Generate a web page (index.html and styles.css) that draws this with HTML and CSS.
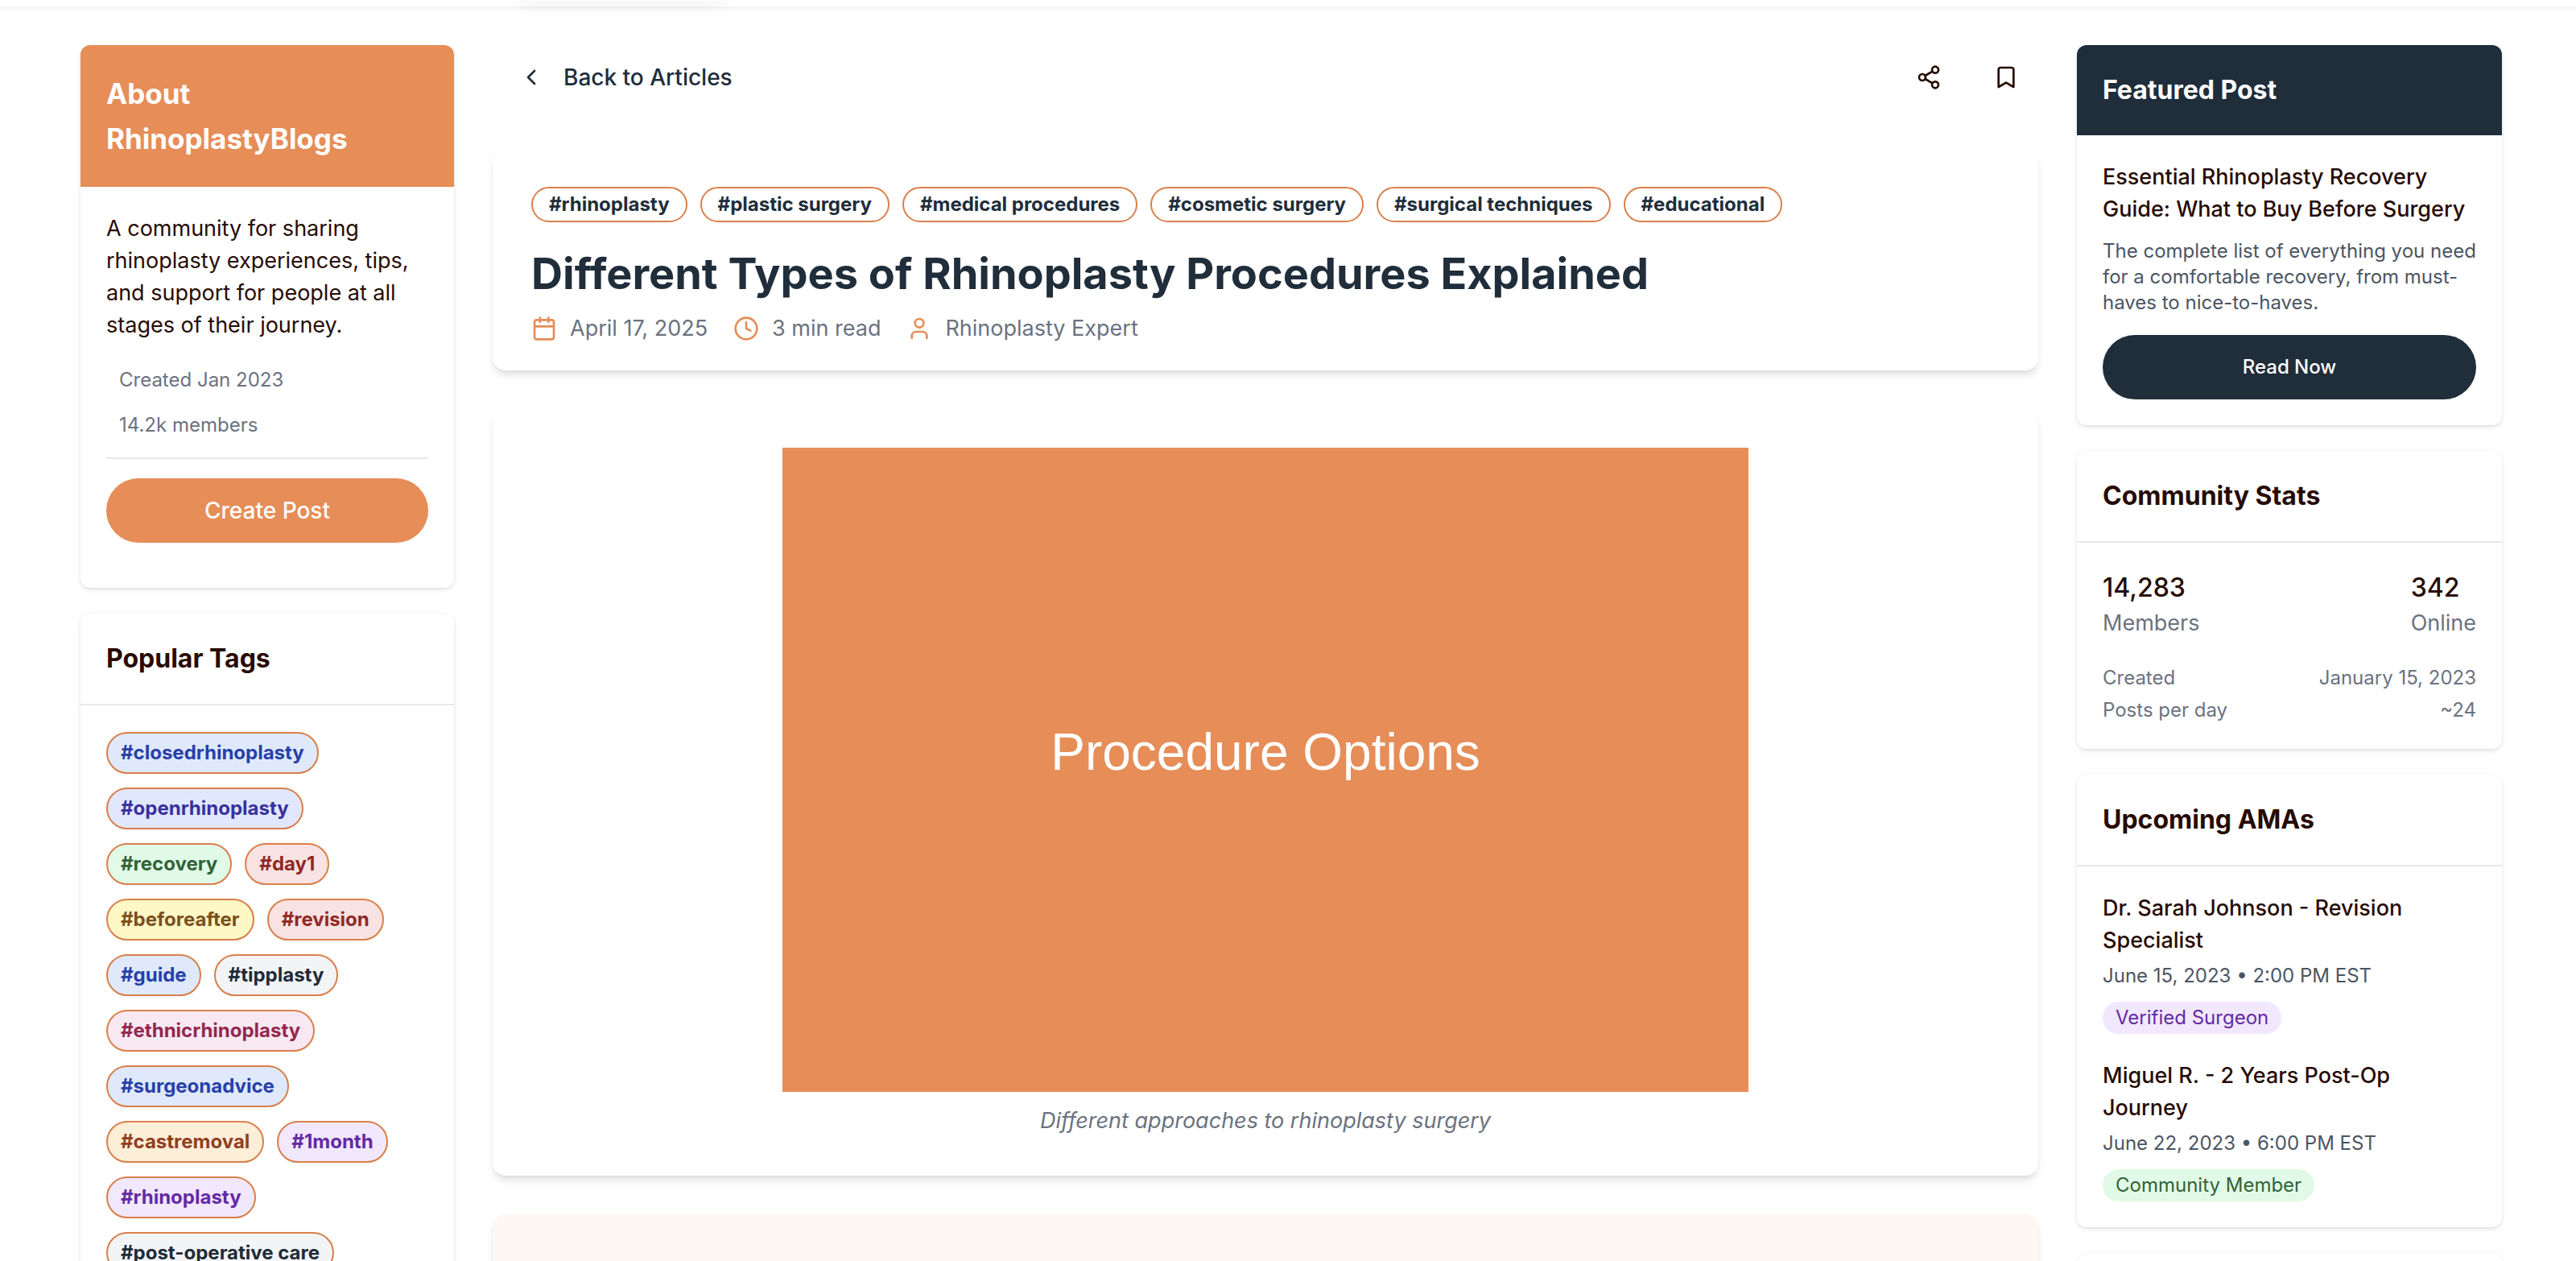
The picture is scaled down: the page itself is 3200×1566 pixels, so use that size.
FILE: index.html
```html
<!DOCTYPE html>
<html lang="en">
<head>
<meta charset="utf-8">
<meta name="viewport" content="width=device-width, initial-scale=1">
<title>Different Types of Rhinoplasty Procedures Explained</title>
<link rel="stylesheet" href="styles.css">
</head>
<body>
<header class="site-header"><div class="nav-highlight"></div></header>
<div class="layout">
  <aside class="column">
    <section class="card">
      <h2 class="card-head card-head-orange">About RhinoplastyBlogs</h2>
      <div class="card-body about-body">
        <p class="text">A community for sharing rhinoplasty experiences, tips, and support for people at all stages of their journey.</p>
        <ul class="facts">
          <li>Created Jan 2023</li>
          <li>14.2k members</li>
        </ul>
        <hr class="rule">
        <button class="btn btn-orange" type="button">Create Post</button>
      </div>
    </section>
    <section class="card">
      <h2 class="card-head card-head-line">Popular Tags</h2>
      <div class="tag-cloud">
        <a class="tag blue" href="#">#closedrhinoplasty</a>
        <a class="tag indigo" href="#">#openrhinoplasty</a>
        <a class="tag green" href="#">#recovery</a>
        <a class="tag red" href="#">#day1</a>
        <a class="tag yellow" href="#">#beforeafter</a>
        <a class="tag red" href="#">#revision</a>
        <a class="tag blue" href="#">#guide</a>
        <a class="tag gray" href="#">#tipplasty</a>
        <a class="tag pink" href="#">#ethnicrhinoplasty</a>
        <a class="tag blue" href="#">#surgeonadvice</a>
        <a class="tag amber" href="#">#castremoval</a>
        <a class="tag purple" href="#">#1month</a>
        <a class="tag purple" href="#">#rhinoplasty</a>
        <a class="tag gray" href="#">#post-operative care</a>
      </div>
    </section>
  </aside>

  <main class="main">
    <div class="toolbar">
      <a class="back" href="#">
        <svg class="icon" viewBox="0 0 24 24"><path d="m15 18-6-6 6-6"/></svg>
        Back to Articles
      </a>
      <div class="actions">
        <button class="icon-btn" type="button" aria-label="Share">
          <svg class="icon" viewBox="0 0 24 24"><circle cx="18" cy="5" r="3"/><circle cx="6" cy="12" r="3"/><circle cx="18" cy="19" r="3"/><path d="m8.59 13.51 6.83 3.98M15.41 6.51l-6.82 3.98"/></svg>
        </button>
        <button class="icon-btn" type="button" aria-label="Bookmark">
          <svg class="icon" viewBox="0 0 24 24"><path d="m19 21-7-4-7 4V5a2 2 0 0 1 2-2h10a2 2 0 0 1 2 2v16z"/></svg>
        </button>
      </div>
    </div>

    <article class="article">
      <header class="panel article-head">
        <div class="topics">
          <a class="topic" href="#">#rhinoplasty</a>
          <a class="topic" href="#">#plastic surgery</a>
          <a class="topic" href="#">#medical procedures</a>
          <a class="topic" href="#">#cosmetic surgery</a>
          <a class="topic" href="#">#surgical techniques</a>
          <a class="topic" href="#">#educational</a>
        </div>
        <h1 class="title">Different Types of Rhinoplasty Procedures Explained</h1>
        <div class="meta">
          <span class="meta-item"><svg class="icon" viewBox="0 0 24 24"><path d="M8 2v4M16 2v4M3 10h18"/><rect width="18" height="18" x="3" y="4" rx="2"/></svg>April 17, 2025</span>
          <span class="meta-item"><svg class="icon" viewBox="0 0 24 24"><circle cx="12" cy="12" r="10"/><path d="M12 6v6l4 2"/></svg>3 min read</span>
          <span class="meta-item"><svg class="icon" viewBox="0 0 24 24"><path d="M19 21v-2a4 4 0 0 0-4-4H9a4 4 0 0 0-4 4v2"/><circle cx="12" cy="7" r="4"/></svg>Rhinoplasty Expert</span>
        </div>
      </header>
      <figure class="panel figure">
        <svg class="figure-art" viewBox="0 0 1200 800">
          <rect class="art-back" width="1200" height="800"/>
          <text class="art-text" x="600" y="400" text-anchor="middle">Procedure Options</text>
        </svg>
        <figcaption class="caption">Different approaches to rhinoplasty surgery</figcaption>
      </figure>
      <section class="panel panel-tint"></section>
    </article>
  </main>

  <aside class="column">
    <section class="card">
      <h2 class="card-head card-head-navy">Featured Post</h2>
      <div class="card-body">
        <h3 class="item-title">Essential Rhinoplasty Recovery Guide: What to Buy Before Surgery</h3>
        <p class="excerpt">The complete list of everything you need for a comfortable recovery, from must-haves to nice-to-haves.</p>
        <button class="btn btn-navy" type="button">Read Now</button>
      </div>
    </section>
    <section class="card">
      <h2 class="card-head card-head-line">Community Stats</h2>
      <div class="card-body">
        <div class="stats">
          <div><div class="stat-value">14,283</div><div class="stat-label">Members</div></div>
          <div><div class="stat-value">342</div><div class="stat-label">Online</div></div>
        </div>
        <dl class="details">
          <div class="detail"><dt>Created</dt><dd>January 15, 2023</dd></div>
          <div class="detail"><dt>Posts per day</dt><dd>~24</dd></div>
        </dl>
      </div>
    </section>
    <section class="card">
      <h2 class="card-head card-head-line">Upcoming AMAs</h2>
      <div class="card-body events">
        <div class="event">
          <h3 class="item-title">Dr. Sarah Johnson - Revision Specialist</h3>
          <p class="event-date">June 15, 2023 • 2:00 PM EST</p>
          <span class="badge purple">Verified Surgeon</span>
        </div>
        <div class="event">
          <h3 class="item-title">Miguel R. - 2 Years Post-Op Journey</h3>
          <p class="event-date">June 22, 2023 • 6:00 PM EST</p>
          <span class="badge green">Community Member</span>
        </div>
      </div>
    </section>
    <section class="card card-next"></section>
  </aside>
</div>
</body>
</html>
```
FILE: styles.css
```css
:root {
  --orange: #e68d58;
  --orange-line: #d97f4a;
  --navy: #202d3a;
  --ink: #270b03;
  --muted: #6b7280;
  --line: #e5e7eb;
}

* { box-sizing: border-box; margin: 0; padding: 0; }

body {
  height: 100vh;
  overflow: hidden;
  background: #fff;
  color: var(--ink);
  font-family: Inter, "Liberation Sans", sans-serif;
  font-size: 27px;
  line-height: 40px;
}

a { color: inherit; text-decoration: none; }
ul { list-style: none; }
button { border: 0; background: none; color: inherit; font: inherit; cursor: pointer; }

.icon {
  flex: none;
  width: 32px;
  height: 32px;
  fill: none;
  stroke: currentColor;
  stroke-width: 2;
  stroke-linecap: round;
  stroke-linejoin: round;
}

.site-header { height: 8px; box-shadow: 0 2px 6px rgba(0, 0, 0, .08); }
.nav-highlight {
  width: 240px;
  height: 1px;
  margin-left: 652px;
  box-shadow: 0 0 20px 6px rgba(0, 0, 0, .06);
}

.layout {
  display: grid;
  grid-template-columns: 464px minmax(0, 1fr) 528px;
  gap: 48px;
  align-items: start;
  padding: 48px 92px 48px 100px;
}
.column { display: flex; flex-direction: column; gap: 32px; }

/* Sidebar cards */
.card {
  overflow: hidden;
  border-radius: 12px;
  background: #fff;
  box-shadow: 0 2px 6px rgba(0, 0, 0, .1), 0 2px 4px -2px rgba(0, 0, 0, .1);
}
.card-head { padding: 32px; font-size: 32px; line-height: 48px; font-weight: 700; }
.card-head-orange { background: var(--orange); color: #fff; font-size: 35px; line-height: 56px; }
.card-head-navy { background: var(--navy); color: #fff; }
.card-head-line { border-bottom: 2px solid var(--line); }
.card-body { padding: 32px; }
.card-next { height: 200px; }

.about-body { padding-bottom: 56px; }
.facts { margin: 20px 16px 12px; color: var(--muted); font-size: 24px; line-height: 56px; }
.rule { height: 2px; margin-bottom: 24px; border: 0; background: var(--line); }

.btn {
  display: block;
  width: 100%;
  height: 80px;
  border-radius: 40px;
  color: #fff;
  font-size: 28px;
  font-weight: 500;
}
.btn-orange { background: var(--orange); }
.btn-navy { background: var(--navy); font-size: 24px; }

.tag-cloud { display: flex; flex-wrap: wrap; gap: 17px 16px; padding: 33px 32px 32px; }
.tag, .topic {
  border: 2px solid var(--orange-line);
  border-radius: 26px;
  font-size: 24px;
  font-weight: 700;
  white-space: nowrap;
}
.tag { padding: 0 16px; line-height: 48px; }
.topic { padding: 0 20px; line-height: 40px; }

.blue { background: #dfe9fb; color: #273fa9; }
.indigo { background: #e1e7fe; color: #37309d; }
.green { background: #e1fae7; color: #316338; }
.red { background: #f8e3e2; color: #8f2924; }
.yellow { background: #fdf8c6; color: #7c4f20; }
.gray { background: #f3f4f6; color: #202b37; }
.pink { background: #f8e8f2; color: #93274e; }
.amber { background: #fdeed8; color: #903e1e; }
.purple { background: #f1e8fd; color: #6429a3; }

/* Article */
.toolbar { display: flex; align-items: center; justify-content: space-between; height: 80px; }
.back {
  display: flex;
  align-items: center;
  gap: 24px;
  padding-left: 32px;
  color: var(--navy);
  font-size: 28px;
  font-weight: 500;
}
.actions { display: flex; gap: 16px; }
.icon-btn { display: grid; place-items: center; width: 80px; height: 80px; }

.article { display: flex; flex-direction: column; gap: 48px; margin-top: 48px; }
.panel {
  padding: 48px;
  border-radius: 16px;
  background: #fff;
  box-shadow: 0 8px 12px -2px rgba(0, 0, 0, .1), 0 4px 8px -4px rgba(0, 0, 0, .1);
}
.article-head { padding-bottom: 32px; color: var(--navy); }
.topics { display: flex; flex-wrap: wrap; gap: 16px; }
.title { margin: 28px 0 12px; font-size: 54px; line-height: 72px; font-weight: 700; }
.meta { display: flex; gap: 32px; color: var(--muted); }
.meta-item { display: flex; align-items: center; gap: 16px; }
.meta .icon { color: var(--orange); }

.figure { display: flex; flex-direction: column; align-items: center; gap: 16px; }
.figure-art { display: block; width: 100%; max-width: 1200px; }
.art-back { fill: var(--orange); }
.art-text { fill: #fff; font-family: "Liberation Sans", Arial, sans-serif; font-size: 64px; }
.caption { color: var(--muted); font-style: italic; }
.panel-tint { height: 300px; background: #fef8f4; }

/* Featured, stats, events */
.item-title { font-size: 27px; line-height: 40px; font-weight: 500; }
.excerpt { margin: 16px 0 24px; color: #4b5563; font-size: 24px; line-height: 32px; }
.stats { display: flex; justify-content: space-between; }
.stat-value { font-size: 32px; line-height: 48px; font-weight: 500; }
.stat-label { color: var(--muted); }
.details { display: flex; flex-direction: column; gap: 8px; margin-top: 32px; color: var(--muted); font-size: 24px; line-height: 32px; }
.detail { display: flex; justify-content: space-between; }
.events { display: flex; flex-direction: column; gap: 32px; }
.event { display: flex; flex-direction: column; align-items: flex-start; }
.event-date { margin: 8px 0 16px; color: #4b5563; font-size: 24px; line-height: 32px; }
.badge { padding: 0 16px; border-radius: 20px; font-size: 24px; line-height: 40px; }
```
